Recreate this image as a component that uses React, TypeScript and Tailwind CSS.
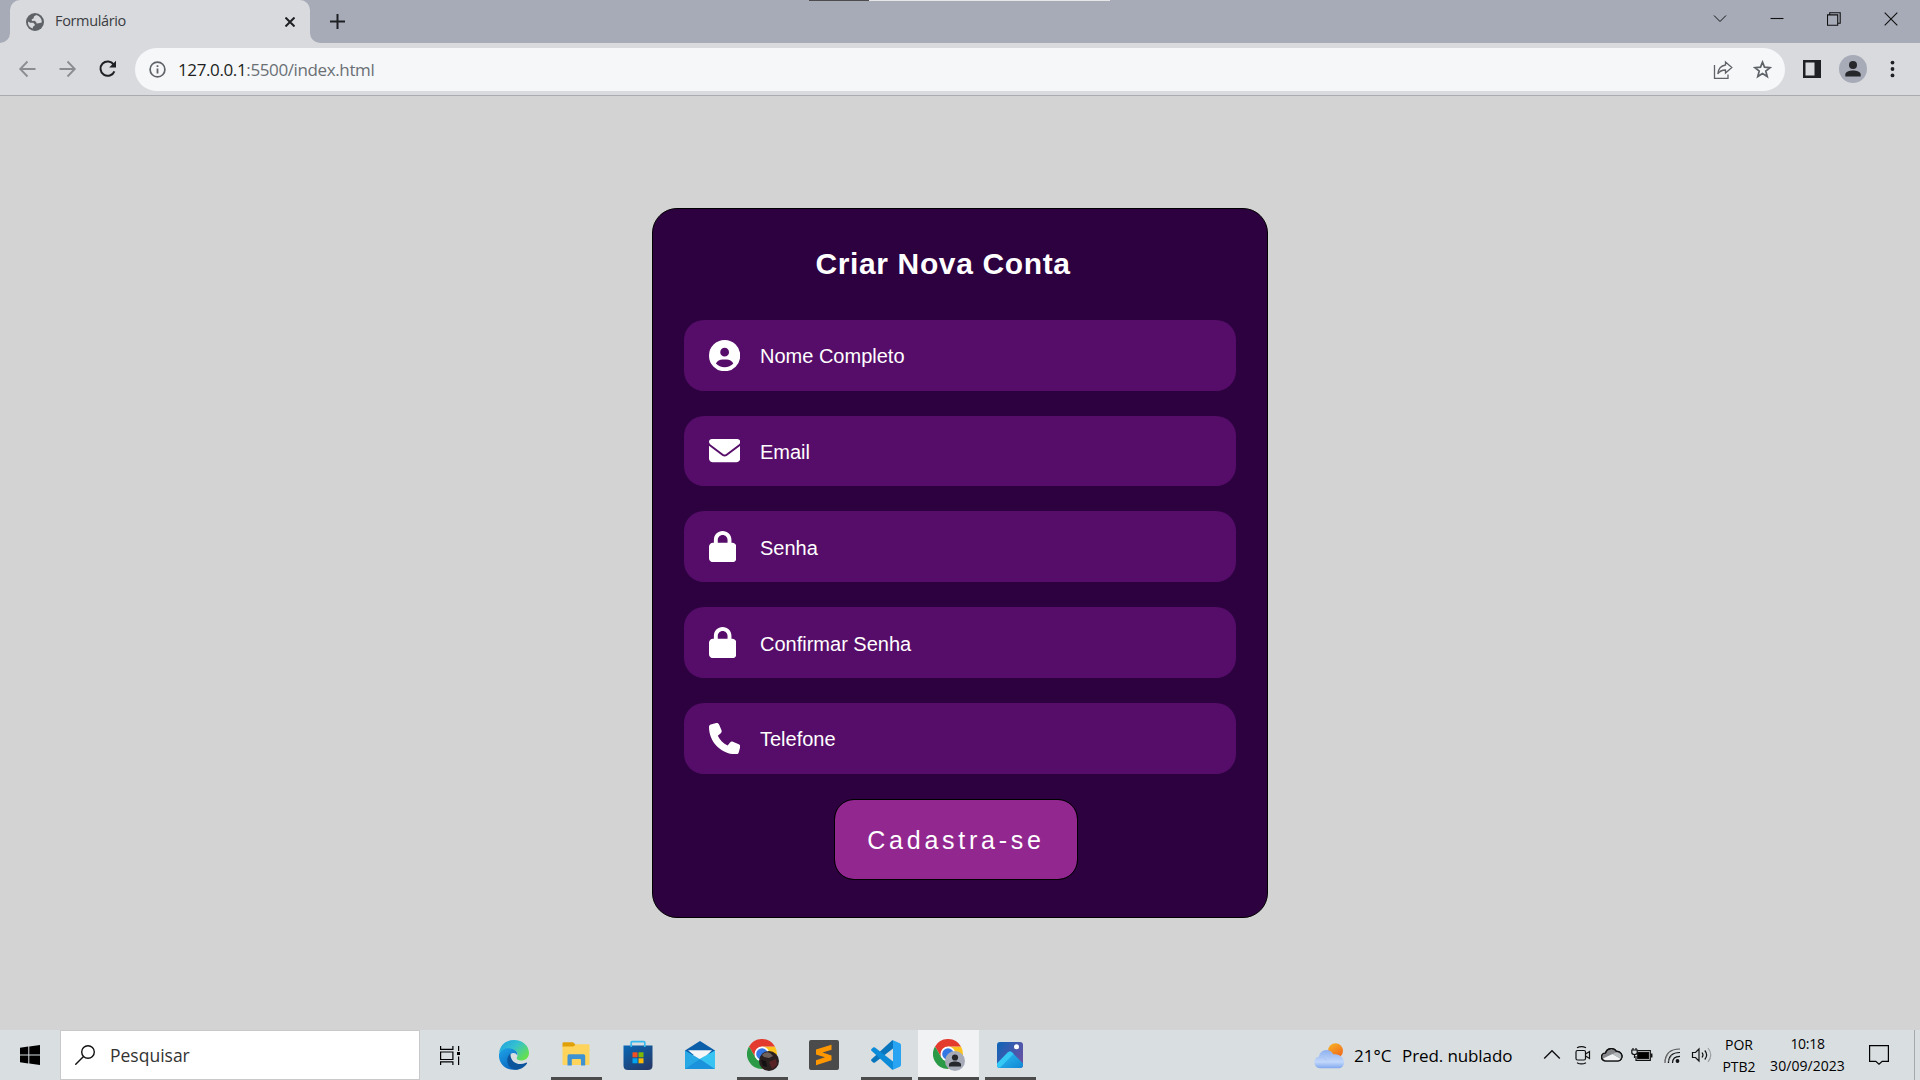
import type { ReactNode } from "react";
import { FaCircleUser, FaEnvelope, FaLock, FaPhone } from "react-icons/fa6";

/* ---------- Browser chrome ---------- */

function Globe() {
  return (
    <svg width="18" height="18" viewBox="0 0 18 18">
      <circle cx="9" cy="9" r="9" fill="#5f6368" />
      <path d="M10.2 2 L8 3.6 L7.6 5.2 L5.6 6.4 L6 8 L8.4 7.8 L10.2 9 L10.6 10.4 L12.6 10.2 L15.8 9.4 A7 7 0 0 0 10.2 2Z" fill="#d9dade" />
      <path d="M2 8.4 L4.2 9.8 L7.2 9.8 L8.8 11.2 L8.4 13 L7 13.4 L6.8 15.6 A7 7 0 0 1 2 8.4Z" fill="#d9dade" />
    </svg>
  );
}

function TabStrip() {
  return (
    <div className="relative flex h-[43px] bg-[#a7abb8]">
      <div className="flex w-[10px] items-end bg-[#d9dade]">
        <div className="h-full w-full rounded-br-[10px] bg-[#a7abb8]" />
      </div>
      <div className="flex h-[43px] w-[300px] items-center rounded-t-[10px] bg-[#d9dade] pr-[15px] pl-[16px]">
        <Globe />
        <span className="ml-[11px] flex-1 pb-0.5 text-[14.5px] leading-5 tracking-[-0.35px] text-[#3a3c41]">Formulário</span>
        <svg width="10" height="10" viewBox="0 0 10 10" stroke="#1f2023" strokeWidth="2">
          <path d="M.5 .5 9.5 9.5M9.5 .5 .5 9.5" />
        </svg>
      </div>
      <div className="flex flex-1 bg-[#d9dade]">
        <div className="flex h-full w-full items-center rounded-bl-[10px] bg-[#a7abb8] pl-[20px]">
          <svg width="15" height="15" viewBox="0 0 15 15" stroke="#1f2023" strokeWidth="2">
            <path d="M7.5 0V15M0 7.5H15" />
          </svg>
        </div>
      </div>
      <div className="flex h-[43px] w-[229px] shrink-0 bg-[#a7abb8] pr-px pb-1.5">
        <WindowButton>
          <path d="M1 3.500 7 9.500 13 3.500" strokeWidth="1" />
        </WindowButton>
        <WindowButton>
          <path d="M.5 6.5H13.5" />
        </WindowButton>
        <WindowButton>
          <path d="M.5 2.9H10.7V13.3H.5ZM2.7 2.9V.7H13.2V11.2H10.7" />
        </WindowButton>
        <WindowButton>
          <path d="M.7 .7 13.3 13.3M13.3 .7 .7 13.3" />
        </WindowButton>
      </div>
      <div className="absolute top-0 left-[809px] flex h-px w-[301px]">
        <div className="w-[60px] bg-[#4d4b4c]" />
        <div className="flex-1 bg-[#e6e6e6]" />
      </div>
    </div>
  );
}

function WindowButton({ children }: { children: ReactNode }) {
  return (
    <div className="flex h-full w-[57px] items-center justify-center">
      <svg width="14" height="14" viewBox="0 0 14 14" fill="none" stroke="#111" strokeWidth="1.1">
        {children}
      </svg>
    </div>
  );
}

function NavButton({ children }: { children: ReactNode }) {
  return (
    <div className="flex w-10 items-center justify-center">
      <svg width="20" height="20" viewBox="0 0 20 20" fill="none">
        {children}
      </svg>
    </div>
  );
}

function Toolbar() {
  return (
    <div className="flex h-[53px] border-b border-[#a9abb1] bg-[#d9dade] pt-[5px] pl-2">
      <div className="flex h-[42px] pr-[7px]">
        <NavButton>
          <path d="M17.5 10H2.5M9.500 2.500 2.200 10 9.500 17.500" stroke="#8a8c91" strokeWidth="1.8" />
        </NavButton>
        <NavButton>
          <path d="M1.500 10H16.500M9.500 2.500 16.800 10 9.500 17.500" stroke="#8a8c91" strokeWidth="1.8" />
        </NavButton>
        <NavButton>
          <path d="M15.700 5.600A7.200 7.200 0 1 0 16.400 12.300" stroke="#1f2023" strokeWidth="2" />
          <path d="M18 1.800V8.600H11.200Z" fill="#1f2023" />
        </NavButton>
      </div>
      <div className="flex h-[43px] w-[1650px] items-center rounded-full bg-[#f5f7f9] pr-[13px] pl-[14px]">
        <svg width="17" height="17" viewBox="0 0 17 17">
          <circle cx="8.500" cy="8.500" r="7.400" fill="none" stroke="#5f6368" strokeWidth="1.700" />
          <path d="M7.600 7.400H9.400V12.500H7.600ZM7.600 4.300H9.400V6H7.600Z" fill="#5f6368" />
        </svg>
        <span className="ml-[12px] flex-1 text-[17px] leading-6 tracking-[-0.38px] text-[#6b6f74]">
          <span className="text-[#1d1e21]">127.0.0.1</span>:5500/index.html
        </span>
        <svg width="20" height="20" viewBox="0 0 20 20" fill="none" stroke="#5f6368" strokeWidth="1.300">
          <path d="M1.500 5V18.300H15V14.500" />
          <path d="M12.500 2 18.800 7.500 12.500 13V10C8.500 10 6.500 11.200 4.800 14C5.200 9.500 7.800 5.700 12.500 5Z" />
        </svg>
        <svg className="ml-5" width="19" height="19" viewBox="0 0 18 18" fill="none" stroke="#5f6368" strokeWidth="1.600">
          <path d="M9 2 10.900 6.800 16.200 7.200 12.100 10.500 13.500 15.700 9 12.900 4.500 15.700 5.900 10.500 1.800 7.200 7.100 6.800Z" />
        </svg>
      </div>
      <div className="flex h-[42px] items-center pl-[18px]">
        <svg width="18" height="18" viewBox="0 0 18 18">
          <path d="M0 0H18V18H0ZM2.500 2.500V15.500H11.500V2.500Z" fill="#1f2023" fillRule="evenodd" />
        </svg>
        <svg className="ml-[18px]" width="28" height="28" viewBox="0 0 28 28">
          <circle cx="14" cy="14" r="14" fill="#a7abb8" />
          <circle cx="14" cy="10" r="4" fill="#26272b" />
          <path d="M6.300 21.600V19.500C6.300 16.800 10.500 15.500 14 15.500S21.700 16.800 21.700 19.500V21.600Z" fill="#26272b" />
        </svg>
        <svg className="ml-[23px]" width="5" height="18" viewBox="0 0 5 18" fill="#1f2023">
          <circle cx="2.500" cy="2.600" r="1.900" />
          <circle cx="2.500" cy="9" r="1.900" />
          <circle cx="2.500" cy="15.400" r="1.900" />
        </svg>
      </div>
    </div>
  );
}

/* ---------- Sign-up form ---------- */

const fields = [
  { label: "Nome Completo", Icon: FaCircleUser, width: "w-[31.25px]" },
  { label: "Email", Icon: FaEnvelope, width: "w-[31.25px]" },
  { label: "Senha", Icon: FaLock, width: "w-[27.34px]" },
  { label: "Confirmar Senha", Icon: FaLock, width: "w-[27.34px]" },
  { label: "Telefone", Icon: FaPhone, width: "w-[31.25px]" },
];

function SignUpCard() {
  return (
    <main className="flex h-[710px] w-[616px] flex-col rounded-[25px] border border-black bg-[#2d0040] px-[31px] pt-8 font-['Liberation_Sans',Arial,sans-serif] text-white">
      <h1 className="pl-[131.5px] text-[30px] leading-[46px] font-bold tracking-[0.625px]">Criar Nova Conta</h1>
      <div className="mt-[33px] flex flex-col gap-[24.95px]">
        {fields.map(({ label, Icon, width }) => (
          <label key={label} className="flex h-[70.75px] items-center rounded-[20px] bg-[#560d69] pl-[24.5px]">
            <span className="w-[51.5px]">
              <Icon className={`h-[31.25px] ${width}`} />
            </span>
            <span className="pt-[2.2px] text-[20px] leading-6">{label}</span>
          </label>
        ))}
      </div>
      <button className="mt-[25.45px] ml-[150px] h-[81px] w-[244px] rounded-[20px] border border-black bg-[#92278f] bg-clip-padding pt-0.5 text-[25px] tracking-[3.75px]">
        Cadastra-se
      </button>
    </main>
  );
}

/* ---------- Taskbar ---------- */

function EdgeIcon() {
  return (
    <svg width="30" height="30" viewBox="0 0 30 30">
      <defs>
        <linearGradient id="edgeTop" x1="0" y1="0" x2="1" y2=".7">
          <stop offset="0" stopColor="#1b9de2" />
          <stop offset=".5" stopColor="#35c1d0" />
          <stop offset="1" stopColor="#66e04b" />
        </linearGradient>
        <linearGradient id="edgeLeft" x1="0" y1="0" x2=".6" y2="1">
          <stop offset="0" stopColor="#1ea5e8" />
          <stop offset="1" stopColor="#0a66c0" />
        </linearGradient>
      </defs>
      <path d="M0 13C1 5 7 0 15 0C24 0 30 6 30 13C30 18 26 20.500 22 20.500C18.500 20.500 17 19 18 17.300C20.500 13 16 9 10.500 9C6 9 2 11 0 13Z" fill="url(#edgeTop)" />
      <path d="M0 14C2 9.500 7 7.800 11 8.500C16.500 9.300 19 12.500 18.300 15.500C16.500 11.500 11 12.500 9.500 17C8 23 13 29 19 29.200C8 32 -1 24 0 14Z" fill="url(#edgeLeft)" />
      <path d="M11.500 13.500C6.500 17 7 26.500 15 29.600C20 30.500 25.500 27.500 28 23.500C28.300 22.800 27.700 22.300 27 22.700C19 26.500 11 22 11.500 13.500Z" fill="#0c549c" />
    </svg>
  );
}

function ExplorerIcon() {
  return (
    <svg className="mb-0.5" width="28" height="24" viewBox="0 0 28 24">
      <path d="M.500 1.500Q.500 .300 1.700 .300H11L13.500 2.500V5H.500Z" fill="#e0a008" />
      <path d="M.500 4.500H11.500L14 2.300H26.500Q27.500 2.300 27.500 3.300V22Q27.500 23 26.500 23H1.500Q.500 23 .500 22Z" fill="#ffd45c" />
      <path d="M5.500 23.500V14Q5.500 12.300 7.200 12.300H21.500Q23.200 12.300 23.200 14V23.500H19V18Q19 17 18 17H10.800Q9.800 17 9.800 18V23.500Z" fill="#3f92d2" />
    </svg>
  );
}

function StoreIcon() {
  return (
    <svg width="30" height="30" viewBox="0 0 30 30">
      <defs>
        <linearGradient id="store" x1="0" y1="0" x2=".7" y2="1">
          <stop offset="0" stopColor="#0868b6" />
          <stop offset="1" stopColor="#243b6b" />
        </linearGradient>
      </defs>
      <path d="M.500 5.500H29.500V25.500Q29.500 30 25 30H5Q.500 30 .500 25.500Z" fill="url(#store)" />
      <path d="M8.200 7V2.700Q8.200 1.700 9.200 1.700H20.800Q21.800 1.700 21.800 2.700V7" fill="none" stroke="#35b9ee" strokeWidth="1.700" />
      <path d="M9.500 12.300H14.500V17.300H9.500Z" fill="#f25022" />
      <path d="M15.500 12.300H20.500V17.300H15.500Z" fill="#7fba00" />
      <path d="M9.500 18.300H14.500V23.300H9.500Z" fill="#00a4ef" />
      <path d="M15.500 18.300H20.500V23.300H15.500Z" fill="#ffb900" />
    </svg>
  );
}

function MailIcon() {
  return (
    <svg width="30" height="28" viewBox="0 0 30 28">
      <path d="M0 9.500 15 0 30 9.500V14H0Z" fill="#0b5ea8" />
      <path d="M3 9.300H27L16 20Z" fill="#f4f5f6" />
      <path d="M0 9.500 15.500 18.500 30 28H0Z" fill="#28a8e4" />
      <path d="M30 9.500V28L14.500 18Z" fill="#38c4f2" />
      <path d="M0 28 15 18 30 28Z" fill="#1b92dc" />
    </svg>
  );
}

function ChromeIcon({ badge }: { badge: "photo" | "person" }) {
  return (
    <svg className="ml-0.5" width="32" height="32" viewBox="0 0 32 32">
      <path d="M15 7.500H27.990A15 15 0 0 1 15 30L21.500 18.700 15 15Z" fill="#fcc31e" />
      <path d="M15 7.500H27.990A15 15 0 0 0 2 7.500L8.500 18.700 15 15Z" fill="#e33b2e" />
      <path d="M8.500 18.700 2 7.500A15 15 0 0 0 15 30L21.500 18.700 15 15Z" fill="#2a9a47" />
      <circle cx="15" cy="15" r="7.500" fill="#fff" />
      <circle cx="15" cy="15" r="5.800" fill="#3477e4" />
      {badge === "person" ? (
        <>
          <circle cx="22" cy="22" r="10" fill="#a7abb8" />
          <circle cx="22" cy="18.500" r="3.100" fill="#26272b" />
          <path d="M16 27.500V25.500C16 23.500 19 22.500 22 22.500S28 23.500 28 25.500V27.500Z" fill="#26272b" />
        </>
      ) : (
        <>
          <circle cx="22" cy="22" r="10" fill="#2a2020" />
          <path d="M15 16Q18 12 23 14L26 17 22 19 17 18Z" fill="#6f625c" />
          <path d="M22 23 29 20 30 26 25 30Z" fill="#592325" />
          <path d="M14 21 19 22 20 28 16 27Z" fill="#121012" />
        </>
      )}
    </svg>
  );
}

function SublimeIcon() {
  return (
    <svg width="30" height="30" viewBox="0 0 30 30">
      <rect width="30" height="30" rx="2" fill="#4b4b4b" />
      <path d="M7 9.500 22.500 4.800V9.800L13.500 12.600 22.500 15.400V20.300L7 25.200V20.200L16 17.300 7 14.500Z" fill="#ff9800" />
    </svg>
  );
}

function VsCodeIcon() {
  return (
    <svg width="30" height="30" viewBox="0 0 30 30">
      <path d="M22 0V8.500L4 22.500Q3 23.200 2.100 22.500L.500 21Q-.300 20.200 .500 19.300L20.700 .700Z" fill="#0875bc" />
      <path d="M22 30V21.500L4 7.500Q3 6.800 2.100 7.500L.500 9Q-.300 9.800 .500 10.700L20.700 29.300Z" fill="#0c8bd8" />
      <path d="M22 .200 28.800 3.200Q30 3.900 30 5V25Q30 26.100 28.800 26.800L22 29.800Z" fill="#29a4f2" />
    </svg>
  );
}

function PhotosIcon() {
  return (
    <svg width="26" height="26" viewBox="0 0 26 26">
      <defs>
        <linearGradient id="sky" x1="0" y1="0" x2="1" y2=".6">
          <stop offset="0" stopColor="#0d65b8" />
          <stop offset="1" stopColor="#6552a5" />
        </linearGradient>
        <linearGradient id="hill" x1="0" y1="0" x2="1" y2="1">
          <stop offset="0" stopColor="#2fc4f4" />
          <stop offset="1" stopColor="#1186d4" />
        </linearGradient>
        <clipPath id="frame">
          <rect width="26" height="26" rx="3" />
        </clipPath>
      </defs>
      <g clipPath="url(#frame)">
        <rect width="26" height="26" fill="url(#sky)" />
        <path d="M0 21.500 11 10.300Q13 8.600 15 10.300L26 21.500V26H0Z" fill="url(#hill)" />
        <path d="M0 21.500 11 10.300Q13 8.600 15 10.300L16.500 12 2.500 26H0Z" fill="#35c9f5" />
      </g>
      <circle cx="19.500" cy="4.700" r="2.500" fill="#fff" />
    </svg>
  );
}

function WeatherIcon() {
  return (
    <svg width="30" height="26" viewBox="0 0 30 26">
      <defs>
        <linearGradient id="sun" x1="0" y1="0" x2=".6" y2="1">
          <stop offset="0" stopColor="#f8b526" />
          <stop offset="1" stopColor="#ef6a1d" />
        </linearGradient>
        <linearGradient id="cloud" x1="0" y1="0" x2="0" y2="1">
          <stop offset="0" stopColor="#8db0ee" />
          <stop offset=".65" stopColor="#c3d8fb" />
          <stop offset="1" stopColor="#80a8ef" />
        </linearGradient>
      </defs>
      <circle cx="21.500" cy="7.800" r="7.500" fill="url(#sun)" />
      <path d="M6 25.300A6 6 0 0 1 5 13.500C5.500 7.500 15 3.500 19.500 11.500C25 10.500 30 14.500 30 19.500C30 23.500 27 25.300 24.500 25.300Z" fill="url(#cloud)" />
      <path d="M5 14.500Q10 13 13 17.500M19.500 12Q16.500 12.500 15 15" fill="none" stroke="#a9c4f5" strokeWidth="1" />
    </svg>
  );
}

type TaskbarEntry = { name: string; icon: ReactNode; state: "idle" | "open" | "active" };

const apps: TaskbarEntry[] = [
  { name: "edge", icon: <EdgeIcon />, state: "idle" },
  { name: "explorer", icon: <ExplorerIcon />, state: "open" },
  { name: "store", icon: <StoreIcon />, state: "idle" },
  { name: "mail", icon: <MailIcon />, state: "idle" },
  { name: "chrome", icon: <ChromeIcon badge="photo" />, state: "open" },
  { name: "sublime", icon: <SublimeIcon />, state: "idle" },
  { name: "vscode", icon: <VsCodeIcon />, state: "open" },
  { name: "chrome-person", icon: <ChromeIcon badge="person" />, state: "active" },
  { name: "photos", icon: <PhotosIcon />, state: "open" },
];

function TaskbarApp({ icon, state }: TaskbarEntry) {
  return (
    <div className="flex w-[62px] flex-col items-center">
      <div className={`flex h-[47px] w-[61px] items-center justify-center pt-[3px] ${state === "active" ? "bg-[#f0f2f4]" : ""}`}>{icon}</div>
      {state === "open" && <div className="h-[3px] w-[51px] bg-[#4c4b4c]" />}
      {state === "active" && <div className="h-[3px] w-[61px] bg-[#4c4b4c]" />}
    </div>
  );
}

function TrayIcon({ children }: { children: ReactNode }) {
  return (
    <div className="flex w-[30px] items-center justify-center">
      <svg width="22" height="20" viewBox="0 0 22 20" fill="none" stroke="#111" strokeWidth="1.200">
        {children}
      </svg>
    </div>
  );
}

function Taskbar() {
  return (
    <footer className="flex h-[50px] bg-[#d9dee1] text-black">
      <div className="flex w-[60px] items-center justify-center">
        <svg width="20" height="20" viewBox="0 0 20 20">
          <path d="M0 2.700 8.300 1.600V9.500H0ZM9.300 1.400 20 0V9.500H9.300ZM0 10.500H8.300V18.400L0 17.300ZM9.300 10.500H20V20L9.300 18.500Z" />
        </svg>
      </div>
      <div className="flex w-[360px] items-center border border-[#c9c9c9] bg-white pl-[14px]">
        <svg width="20" height="20" viewBox="0 0 20 20" fill="none" stroke="#111" strokeWidth="1.400">
          <circle cx="13" cy="7" r="6.300" />
          <path d="M8.500 11.500 .300 19.700" />
        </svg>
        <span className="ml-[15px] text-[17.5px] leading-6 text-[#333]">Pesquisar</span>
      </div>
      <div className="flex w-[63px] items-center pl-5">
        <svg width="20" height="19" viewBox="0 0 20 19" fill="none" stroke="#000" strokeWidth="1.200">
          <path d="M.600 0V3.400H12.900V0M.600 6H12.900V13.500H.600ZM.600 19V15.900H12.900V19M18.600 0V5M18.600 10.500V19" />
          <path d="M17 6H20V9H17Z" fill="#000" stroke="none" />
        </svg>
      </div>
      <div className="flex">
        {apps.map((app) => (
          <TaskbarApp key={app.name} {...app} />
        ))}
      </div>
      <div className="ml-auto flex items-center pt-0.5 text-[17px] leading-6">
        <WeatherIcon />
        <span className="ml-[10px] w-12">21°C</span>
        <span className="w-[135px] tracking-[-0.1px] whitespace-nowrap">Pred. nublado</span>
      </div>
      <div className="flex">
        <TrayIcon>
          <path d="M3.200 13.500 11 5.800 18.800 13.500" strokeWidth="1.400" />
        </TrayIcon>
        <TrayIcon>
          <rect x="5" y="5.500" width="9.500" height="9.500" rx="1.500" />
          <path d="M14.500 9 18.500 6.500V13.500L14.500 11M6 2.800Q10.500 .300 15 2.800M6 17.700Q10.500 20.200 15 17.700" />
        </TrayIcon>
        <TrayIcon>
          <path d="M4.500 16A4 4 0 0 1 4.500 8A6 6 0 0 1 15.500 6.500A4.800 4.800 0 0 1 17 16Z" fill="#85878a" />
          <path d="M2 13.500 11.500 9 20 14 17.500 15.500H4.500Z" fill="#f0f2f3" stroke="none" />
          <path d="M11.500 9 15.500 7.200Q20.300 8.500 20.600 12L20 14Z" fill="#b9bcbe" stroke="none" />
          <path d="M4.500 16A4 4 0 0 1 4.500 8A6 6 0 0 1 15.500 6.500A4.800 4.800 0 0 1 17 16Z" />
        </TrayIcon>
        <TrayIcon>
          <path d="M5 5.500H19.300V15.300H5V11" />
          <path d="M6.700 7.300H17.500V13.500H6.700Z" fill="#000" />
          <path d="M20.700 8.500V12.500" strokeWidth="1.500" />
          <path d="M2 3V5.500M5 3V5.500M3.500 9V13" />
          <path d="M.800 5H6.200V7.500Q6.200 9.500 3.500 9.500T.800 7.500Z" fill="#d9dee1" />
        </TrayIcon>
        <TrayIcon>
          <path d="M4 18Q4 4 19 4" stroke="#555" />
          <path d="M7.500 18Q7.500 7.500 19 7.500M11.500 18Q11.500 11.300 19 11.300" />
          <path d="M3.500 16 7.500 8M6.500 17.500 11 10" stroke="#777" strokeWidth=".700" />
          <circle cx="16.500" cy="16" r="1.900" fill="#111" stroke="none" />
        </TrayIcon>
        <TrayIcon>
          <path d="M1.500 7.500H4.500L8 4V16L4.500 12.500H1.500Z" />
          <path d="M11 7.500Q13 10 11 12.500M13.800 5.500Q17.500 10 13.800 14.500" />
          <path d="M17 3Q22.500 10 17 17" stroke="#9b9ea1" />
        </TrayIcon>
      </div>
      <div className="flex w-[46px] flex-col items-center justify-center pt-0.5 pr-0.5 text-[14px] leading-[22px]">
        <span>POR</span>
        <span>PTB2</span>
      </div>
      <div className="flex w-[90px] flex-col items-center justify-center pr-px text-[14px] leading-[22.5px]">
        <span className="tracking-[-0.3px]">10:18</span>
        <span className="tracking-[0.05px]">30/09/2023</span>
      </div>
      <div className="flex w-[61px] items-center pl-4">
        <svg width="20" height="20" viewBox="0 0 20 20" fill="none" stroke="#000" strokeWidth="1.200">
          <path d="M.600 .600H19.400V16.400H13.200L10 19.200 6.800 16.400H.600Z" />
        </svg>
      </div>
      <div className="w-1.5 border-l border-[#a5a9ac]" />
    </footer>
  );
}

export default function App() {
  return (
    <div className="flex h-[1080px] w-[1920px] flex-col overflow-hidden bg-[#d3d3d3] font-['Open_Sans',sans-serif]">
      <header>
        <TabStrip />
        <Toolbar />
      </header>
      <div className="flex flex-1 justify-center pt-[112px]">
        <SignUpCard />
      </div>
      <Taskbar />
    </div>
  );
}
